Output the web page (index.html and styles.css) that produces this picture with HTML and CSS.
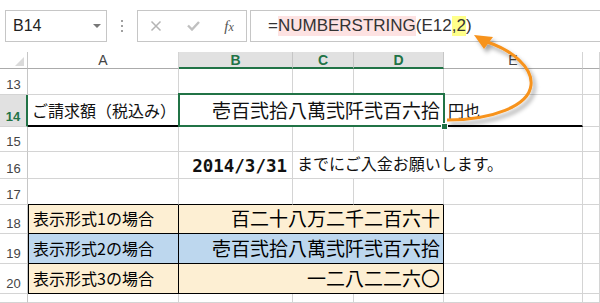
FILE: index.html
```html
<!DOCTYPE html>
<html lang="ja">
<head>
  <meta charset="UTF-8" />
  <title>NUMBERSTRING</title>
  <link rel="stylesheet" href="styles.css">
</head>
<body>
  <div class="toolbar">
    <div class="namebox"><span>B14</span><span class="caret"></span></div>
    <div class="grip">
      <svg width="4" height="12" viewBox="0 0 4 12"><rect x="1" y="0" width="2" height="2" fill="#a0a0a0"/><rect x="1" y="5" width="2" height="2" fill="#a0a0a0"/><rect x="1" y="10" width="2" height="2" fill="#a0a0a0"/></svg>
    </div>
    <div class="fxbox">
      <svg width="12" height="12" viewBox="0 0 12 12"><path d="M1.5 1.5 L10.5 10.5 M10.5 1.5 L1.5 10.5" stroke="#b4b4b4" stroke-width="1.5" fill="none"/></svg>
      <svg width="13" height="10" viewBox="0 0 13 10"><path d="M1 4.5 L5 8.5 L12 1" stroke="#c0c0c0" stroke-width="2.4" fill="none"/></svg>
      <span class="fx"><i>f</i><i class="sub">x</i></span>
    </div>
    <div class="formula">=<span class="hl-pink">NUMBERSTRING</span>(E12<span class="hl-yellow">,2</span>)</div>
  </div>

  <div class="sheet">
    <!-- column headers -->
    <div class="corner"><span class="tri"></span></div>
    <div class="ch">A</div>
    <div class="ch sel">B</div>
    <div class="ch sel">C</div>
    <div class="ch sel">D</div>
    <div class="ch">E</div>
    <div class="ch"></div>

    <!-- 13 -->
    <div class="rh">13</div>
    <div class="c"></div><div class="c"></div><div class="c"></div><div class="c"></div><div class="c"></div><div class="c"></div>

    <!-- 14 -->
    <div class="rh rh-sel">14</div>
    <div class="c thick">ご請求額（税込み）</div>
    <div class="c thick big right span3 active">壱百弐拾八萬弐阡弐百六拾<span class="handle"></span></div>
    <div class="c thick">円也</div>
    <div class="c"></div>

    <!-- 15 -->
    <div class="rh">15</div>
    <div class="c"></div><div class="c"></div><div class="c"></div><div class="c"></div><div class="c"></div><div class="c"></div>

    <!-- 16 -->
    <div class="rh">16</div>
    <div class="c"></div>
    <div class="c right date">2014/3/31</div>
    <div class="c span3">までにご入金お願いします。</div>
    <div class="c"></div>

    <!-- 17 -->
    <div class="rh">17</div>
    <div class="c edge"></div><div class="c edge"></div><div class="c edge"></div><div class="c edge"></div><div class="c"></div><div class="c"></div>

    <!-- 18 -->
    <div class="rh">18</div>
    <div class="c fmt first peach">表示形式1の場合</div>
    <div class="c fmt peach big right span3">百二十八万二千二百六十</div>
    <div class="c"></div><div class="c"></div>

    <!-- 19 -->
    <div class="rh">19</div>
    <div class="c fmt first blue">表示形式2の場合</div>
    <div class="c fmt blue big right span3">壱百弐拾八萬弐阡弐百六拾</div>
    <div class="c"></div><div class="c"></div>

    <!-- 20 -->
    <div class="rh">20</div>
    <div class="c fmt first peach">表示形式3の場合</div>
    <div class="c fmt peach big right span3">一二八二二六〇</div>
    <div class="c"></div><div class="c"></div>

    <!-- 21 (scrolled off, number not visible) -->
    <div class="rh"></div>
    <div class="c"></div><div class="c"></div><div class="c"></div><div class="c"></div><div class="c"></div><div class="c"></div>
  </div>

  <svg class="arrow" width="600" height="303" viewBox="0 0 600 303">
    <defs>
      <filter id="shadow" x="-20%" y="-20%" width="140%" height="140%">
        <feDropShadow dx="3" dy="4" stdDeviation="2" flood-color="#000" flood-opacity="0.35"/>
      </filter>
    </defs>
    <g filter="url(#shadow)">
      <path d="M447 120 C492 120, 529 106, 531 85 C533 68, 512 50, 487 42" stroke="#f7931e" stroke-width="3" fill="none"/>
      <polygon points="474,35 493,37 484,49" fill="#f7931e"/>
    </g>
  </svg>
</body>
</html>
```

FILE: styles.css
```css
:root {
  --grid-line: #d4d4d4;
  --excel-green: #217346;
}

body {
  margin: 0;
  width: 600px;
  height: 303px;
  overflow: hidden;
  position: relative;
  background: #fff;
  font-family: "Noto Sans CJK JP", sans-serif;
  color: #111;
}

/* formula bar */
.toolbar {
  display: flex;
  align-items: center;
  height: 52px;
  padding-left: 5px;
  box-sizing: border-box;
}

.namebox {
  width: 102px;
  height: 32px;
  box-sizing: border-box;
  border: 1px solid #c6c6c6;
  display: flex;
  align-items: center;
  justify-content: space-between;
  padding: 0 5px 0 7px;
  font: 16px "Liberation Sans", sans-serif;
  color: #222;
}

.caret {
  border-left: 4px solid transparent;
  border-right: 4px solid transparent;
  border-top: 4px solid #777;
}

.grip {
  width: 30px;
  display: flex;
  justify-content: center;
}

.fxbox {
  width: 110px;
  height: 32px;
  box-sizing: border-box;
  border: 1px solid #c6c6c6;
  display: flex;
  align-items: center;
  justify-content: space-around;
}

.fx {
  font: italic 15px "Liberation Serif", serif;
  color: #555;
}

.fx .sub {
  font-size: 12px;
}

.formula {
  flex: 1;
  margin-left: 3px;
  margin-right: -10px;
  height: 32px;
  box-sizing: border-box;
  border: 1px solid #c6c6c6;
  padding-left: 17px;
  display: flex;
  align-items: center;
  font: 17px "Liberation Sans", sans-serif;
  color: #333;
  white-space: pre;
}

.hl-pink {
  background: #fde2e2;
}

.hl-yellow {
  background: #ffff8a;
}

/* sheet */
.sheet {
  display: grid;
  grid-template-columns: 28px 151px 114px 61px 90px 139px 1fr;
  grid-template-rows: 17px 26px 32px 25px 27px 26px 29px 30px 30px 9px;
}

.sheet > div {
  box-sizing: border-box;
  min-width: 0;
}

.corner {
  border-right: 1px solid #c6c6c6;
  border-bottom: 1px solid #ababab;
  position: relative;
}

.tri {
  position: absolute;
  right: 3px;
  bottom: 2px;
  border-left: 9px solid transparent;
  border-bottom: 9px solid #dadada;
}

.ch {
  border-right: 1px solid var(--grid-line);
  border-bottom: 1px solid #ababab;
  font: 14px "Liberation Sans", sans-serif;
  color: #444;
  display: flex;
  align-items: center;
  justify-content: center;
}

.ch.sel {
  background: #e1e1e1;
  color: var(--excel-green);
  font-weight: bold;
  border-right-color: #c6c6c6;
  border-bottom: 2px solid var(--excel-green);
}

.rh {
  border-right: 1px solid #c6c6c6;
  border-bottom: 1px solid var(--grid-line);
  font: 13px "Liberation Sans", sans-serif;
  line-height: 1;
  color: #444;
  display: flex;
  align-items: flex-end;
  justify-content: center;
  padding-bottom: 3px;
}

.rh-sel {
  background: #e1e1e1;
  color: var(--excel-green);
  font-weight: bold;
  border-right: 2px solid var(--excel-green);
}

.c {
  border-right: 1px solid var(--grid-line);
  border-bottom: 1px solid var(--grid-line);
  display: flex;
  align-items: flex-end;
  padding: 0 3px 7px 4px;
  font-size: 16px;
  line-height: 1;
  white-space: nowrap;
  position: relative;
}

.right {
  justify-content: flex-end;
}

.span3 {
  grid-column: span 3;
}

.big {
  font-size: 19px;
  padding-bottom: 6px;
}

.thick {
  border-bottom: 2px solid #000;
}

.active::after {
  content: "";
  position: absolute;
  top: -2px;
  left: -1px;
  right: -2px;
  bottom: -2px;
  border: 2px solid var(--excel-green);
}

.handle {
  position: absolute;
  right: -5px;
  bottom: -5px;
  width: 5px;
  height: 5px;
  background: var(--excel-green);
  border: 1px solid #fff;
  z-index: 1;
}

.date {
  font: bold 17.5px "DejaVu Sans Mono", monospace;
  line-height: 1;
  padding-bottom: 3px;
  padding-right: 5px;
}

.edge {
  border-bottom-color: #000;
}

.fmt {
  border-right-color: #000;
  border-bottom-color: #000;
  color: #000;
}

.first {
  border-left: 1px solid #000;
}

.peach {
  background: #fdefd3;
}

.blue {
  background: #bdd7ee;
}

.arrow {
  position: absolute;
  top: 0;
  left: 0;
  pointer-events: none;
}
```
